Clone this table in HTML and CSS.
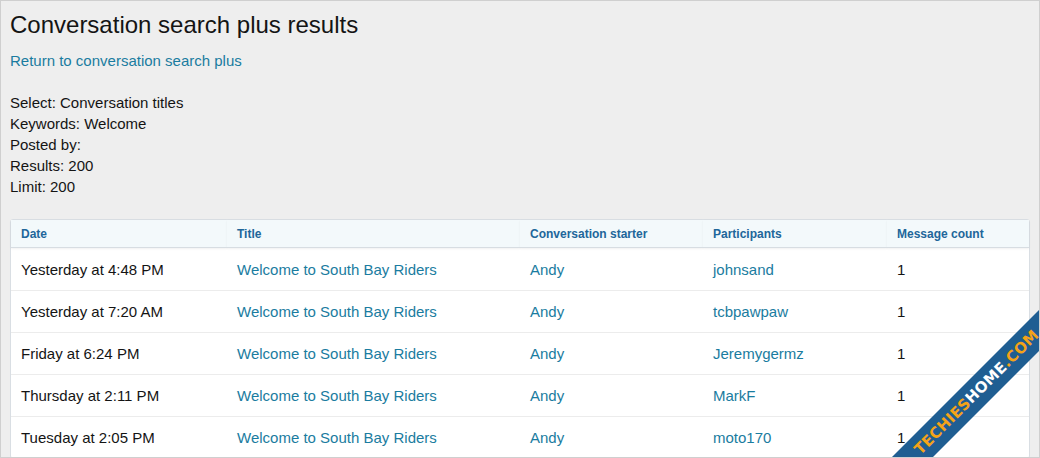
FILE: index.html
```html
<!DOCTYPE html>
<html lang="en">
<head>
<meta charset="utf-8">
<title>Conversation search plus results</title>
<link rel="stylesheet" href="styles.css">
</head>
<body>
<div class="page">
  <h1 class="title">Conversation search plus results</h1>
  <a class="back-link" href="#">Return to conversation search plus</a>
  <div class="criteria">
    <div>Select: Conversation titles</div>
    <div>Keywords: Welcome</div>
    <div>Posted by:</div>
    <div>Results: 200</div>
    <div>Limit: 200</div>
  </div>
  <div class="results">
    <table class="results-table">
      <colgroup>
        <col class="c-date"><col class="c-title"><col class="c-starter"><col class="c-part"><col class="c-count">
      </colgroup>
      <thead>
        <tr><th>Date</th><th>Title</th><th>Conversation starter</th><th>Participants</th><th>Message count</th></tr>
      </thead>
      <tbody>
        <tr><td>Yesterday at 4:48 PM</td><td><a href="#">Welcome to South Bay Riders</a></td><td><a href="#">Andy</a></td><td><a href="#">johnsand</a></td><td>1</td></tr>
        <tr><td>Yesterday at 7:20 AM</td><td><a href="#">Welcome to South Bay Riders</a></td><td><a href="#">Andy</a></td><td><a href="#">tcbpawpaw</a></td><td>1</td></tr>
        <tr><td>Friday at 6:24 PM</td><td><a href="#">Welcome to South Bay Riders</a></td><td><a href="#">Andy</a></td><td><a href="#">Jeremygermz</a></td><td>1</td></tr>
        <tr><td>Thursday at 2:11 PM</td><td><a href="#">Welcome to South Bay Riders</a></td><td><a href="#">Andy</a></td><td><a href="#">MarkF</a></td><td>1</td></tr>
        <tr><td>Tuesday at 2:05 PM</td><td><a href="#">Welcome to South Bay Riders</a></td><td><a href="#">Andy</a></td><td><a href="#">moto170</a></td><td>1</td></tr>
      </tbody>
    </table>
  </div>
  <div class="ribbon"><span class="or">TECHIES</span><span class="wh">HOME</span><span class="or">.COM</span></div>
</div>
</body>
</html>
```
FILE: styles.css
```css
html, body {
  margin: 0;
  padding: 0;
}
body {
  font-family: "Liberation Sans", Arial, sans-serif;
  color: #141414;
  background: #eeeeee;
}
.page {
  position: relative;
  box-sizing: border-box;
  width: 1040px;
  height: 458px;
  overflow: hidden;
  border: 1px solid #cfcfcf;
  background: #eeeeee;
  padding: 9px 9px 0 9px;
}
.title {
  margin: 0;
  font-size: 24px;
  font-weight: normal;
  line-height: 30px;
  color: #141414;
}
.back-link {
  display: block;
  margin-top: 10px;
  font-size: 15px;
  line-height: 21px;
  color: #1a7ca0;
  text-decoration: none;
}
.criteria {
  margin-top: 21px;
  font-size: 15px;
  line-height: 21px;
}
.results {
  margin-top: 22px;
  background: #ffffff;
  border: 1px solid #d9dee3;
  border-radius: 3px;
}
.results-table {
  width: 100%;
  border-collapse: collapse;
  table-layout: fixed;
}
.c-date { width: 216px; }
.c-title { width: 293px; }
.c-starter { width: 183px; }
.c-part { width: 184px; }
.results-table th {
  height: 27px;
  padding: 0 10px;
  text-align: left;
  font-size: 12px;
  font-weight: bold;
  color: #21669a;
  background: #f3f9fb;
  border-bottom: 1px solid #d7dde2;
  box-shadow: 0 1px 2px rgba(0,0,0,0.06);
}
.results-table td {
  height: 41px;
  padding: 0 10px;
  font-size: 15px;
  color: #141414;
  border-top: 1px solid #ececec;
  white-space: nowrap;
}
.results-table tbody tr:first-child td {
  border-top: none;
  height: 42px;
}
.results-table td a {
  color: #1a7ca0;
  text-decoration: none;
}
.ribbon {
  position: absolute;
  left: 826px;
  top: 377px;
  width: 300px;
  height: 29px;
  line-height: 29px;
  background: #1f5e92;
  transform: rotate(-45deg);
  text-align: center;
  font-family: "DejaVu Sans", "Liberation Sans", sans-serif;
  font-weight: bold;
  font-size: 15px;
  letter-spacing: 0.2px;
  white-space: nowrap;
}
.ribbon .or { color: #f5a318; }
.ribbon .wh { color: #ffffff; }
```
